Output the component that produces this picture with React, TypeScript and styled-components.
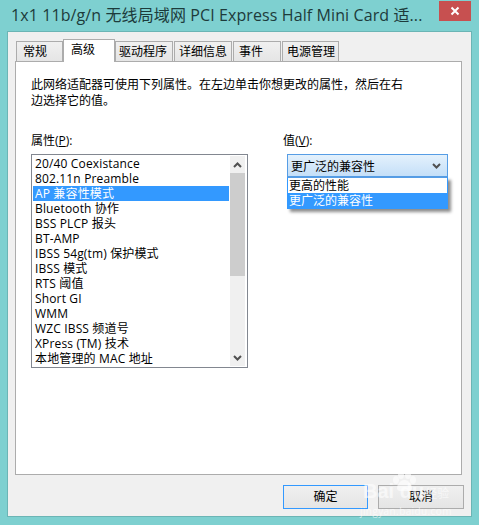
import React from 'react';
import styled, { createGlobalStyle } from 'styled-components';

const GlobalStyle = createGlobalStyle`
  html, body {
    margin: 0;
    padding: 0;
    background: #7ed0d0;
  }
  body {
    font-family: "Open Sans", "Noto Sans CJK SC", sans-serif;
    font-size: 12px;
    color: #000;
  }
`;

const Win = styled.div`
  position: relative;
  width: 479px;
  height: 525px;
  box-sizing: border-box;
  padding: 0 7px 8px 7px;
  display: flex;
  flex-direction: column;
  overflow: hidden;
  background: #7ed0d0;
`;

const TitleBar = styled.div`
  height: 31px;
  flex: none;
  display: flex;
  align-items: flex-start;
  justify-content: space-between;
`;

const Title = styled.div`
  margin: 5px 0 0 4px;
  font-size: 16px;
  line-height: 20px;
  letter-spacing: 0.1px;
  color: #1d3b3b;
  white-space: nowrap;
`;

const CloseBtn = styled.div`
  width: 32px;
  height: 20px;
  margin: 1px 1px 0 0;
  background: #c75050;
  display: flex;
  align-items: center;
  justify-content: center;
`;

const Client = styled.div`
  flex: 1;
  min-height: 0;
  box-sizing: border-box;
  border: 1px solid #6bb5b5;
  background: #f0f0f0;
  padding: 7px 9px 9px 7px;
  display: flex;
  flex-direction: column;
`;

const TabRow = styled.div`
  display: flex;
  height: 23px;
  flex: none;
  align-items: flex-end;
  padding-left: 1px;
  position: relative;
  z-index: 1;
  margin-bottom: -1px;
`;

const Tab = styled.div<{ $w: number; $pad: number; $active?: boolean }>`
  box-sizing: border-box;
  width: ${(p) => p.$w}px;
  height: ${(p) => (p.$active ? 23 : 21)}px;
  margin-left: ${(p) => (p.$active ? -1 : 0)}px;
  margin-right: ${(p) => (p.$active ? 0 : 1)}px;
  border: 1px solid #acacac;
  border-bottom: ${(p) => (p.$active ? 'none' : '1px solid #acacac')};
  background: ${(p) => (p.$active ? '#fff' : 'linear-gradient(#f0f0f0, #e5e5e5)')};
  padding-left: ${(p) => p.$pad}px;
  line-height: 20px;
  white-space: nowrap;
  font-size: 12px;
`;

const Panel = styled.div`
  flex: none;
  height: 414px;
  box-sizing: border-box;
  border: 1px solid #acacac;
  background: #fff;
  padding: 15px 15px 0 15px;
`;

const Intro = styled.div`
  width: 375px;
  line-height: 16px;
  font-size: 12px;
`;

const Columns = styled.div`
  display: flex;
  margin-top: 24px;
`;

const LeftCol = styled.div`
  width: 217px;
  flex: none;
`;

const RightCol = styled.div`
  width: 161px;
  margin-left: 39px;
  flex: none;
  position: relative;
`;

const FieldLabel = styled.div`
  height: 15px;
  line-height: 15px;
  margin-bottom: 6px;
  font-size: 12px;
  u {
    text-decoration: underline;
  }
`;

const ValueLabel = styled(FieldLabel)`
  margin-left: -4px;
`;

const ListBox = styled.div`
  box-sizing: border-box;
  width: 217px;
  height: 214px;
  border: 1px solid #828790;
  padding: 1px 2px 1px 1px;
  display: flex;
  background: #fff;
`;

const Rows = styled.div`
  flex: 1;
  min-width: 0;
`;

const Row = styled.div<{ $sel?: boolean }>`
  height: 15px;
  line-height: 15px;
  padding-left: 2px;
  white-space: nowrap;
  font-size: 12px;
  letter-spacing: 0.15px;
  background: ${(p) => (p.$sel ? '#3399ff' : 'transparent')};
  color: ${(p) => (p.$sel ? '#fff' : '#000')};
`;

const ScrollBar = styled.div`
  width: 15px;
  flex: none;
  margin-left: 1px;
  display: flex;
  flex-direction: column;
  background: #f0f0f0;
`;

const ScrollArrow = styled.div`
  height: 17px;
  flex: none;
  display: flex;
  align-items: center;
  justify-content: center;
`;

const ScrollThumb = styled.div`
  height: 103px;
  flex: none;
  background: #cdcdcd;
`;

const ScrollTrack = styled.div`
  flex: 1;
`;

const Combo = styled.div`
  box-sizing: border-box;
  height: 23px;
  border: 1px solid #569de5;
  background: linear-gradient(#e4f1fc, #c4dff8);
  display: flex;
  align-items: center;
  justify-content: space-between;
  padding: 0 6px 0 3px;
  font-size: 12px;
`;

const DropList = styled.div`
  position: absolute;
  top: 44px;
  left: 0;
  width: 161px;
  box-sizing: border-box;
  border: 1px solid #3399ff;
  border-top: 1px solid #569de5;
  background: #fff;
  box-shadow: 3px 3px 3px rgba(0, 0, 0, 0.45);
`;

const DropItem = styled.div<{ $sel?: boolean }>`
  height: 15px;
  line-height: 15px;
  padding-left: 1px;
  font-size: 12px;
  background: ${(p) => (p.$sel ? '#3399ff' : '#fff')};
  color: ${(p) => (p.$sel ? '#fff' : '#000')};
`;

const Footer = styled.div`
  display: flex;
  justify-content: flex-end;
  gap: 10px;
  margin-top: 10px;
  margin-right: -2px;
`;

const Btn = styled.div<{ $primary?: boolean }>`
  box-sizing: border-box;
  width: ${(p) => (p.$primary ? 85 : 86)}px;
  height: 24px;
  line-height: 21px;
  text-align: center;
  font-size: 12px;
  border: ${(p) => (p.$primary ? '1px solid #3399ff' : '1px solid #acacac')};
  background: linear-gradient(#f0f0f0, #e5e5e5);
`;

const Watermark = styled.div`
  position: absolute;
  left: 360px;
  top: 470px;
  width: 119px;
  height: 50px;
  color: rgba(255, 255, 255, 0.6);
  pointer-events: none;
`;

const MarkBrand = styled.div`
  position: absolute;
  left: 3px;
  top: 10px;
  font-family: "Liberation Sans", "Noto Sans CJK SC", sans-serif;
  font-size: 20px;
  font-weight: 700;
  white-space: nowrap;
`;

const MarkCn = styled.span`
  margin-left: 1px;
  font-size: 12px;
  font-weight: 400;
`;

const MarkUrl = styled.div`
  position: absolute;
  left: 0;
  top: 34px;
  font-size: 10px;
  letter-spacing: 0.4px;
  white-space: nowrap;
`;

const MarkPaw = styled.svg`
  position: absolute;
  left: 31px;
  top: 1px;
`;

const tabs = [
  { label: '常规', w: 47, pad: 6 },
  { label: '高级', w: 52, pad: 7, active: true },
  { label: '驱动程序', w: 58, pad: 3 },
  { label: '详细信息', w: 58, pad: 4 },
  { label: '事件', w: 48, pad: 5 },
  { label: '电源管理', w: 57, pad: 4 },
];

const props = [
  '20/40 Coexistance',
  '802.11n Preamble',
  'AP 兼容性模式',
  'Bluetooth 协作',
  'BSS PLCP 报头',
  'BT-AMP',
  'IBSS 54g(tm) 保护模式',
  'IBSS 模式',
  'RTS 阈值',
  'Short GI',
  'WMM',
  'WZC IBSS 频道号',
  'XPress (TM) 技术',
  '本地管理的 MAC 地址',
];

const Chevron: React.FC<{ up?: boolean; color?: string }> = ({ up, color = '#505050' }) => (
  <svg width="9" height="6" viewBox="0 0 9 6">
    <path
      d={up ? 'M1 5 L4.5 1.5 L8 5' : 'M1 1 L4.5 4.5 L8 1'}
      fill="none"
      stroke={color}
      strokeWidth="2"
    />
  </svg>
);

const App: React.FC = () => {
  return (
    <Win>
      <GlobalStyle />
      <TitleBar>
        <Title>1x1 11b/g/n 无线局域网 PCI Express Half Mini Card 适...</Title>
        <CloseBtn>
          <svg width="10" height="10" viewBox="0 0 10 10">
            <path d="M1.5 1.5 L8.5 8.5 M8.5 1.5 L1.5 8.5" stroke="#fff" strokeWidth="2" />
          </svg>
        </CloseBtn>
      </TitleBar>
      <Client>
        <TabRow>
          {tabs.map((t) => (
            <Tab key={t.label} $w={t.w} $pad={t.pad} $active={t.active}>
              {t.label}
            </Tab>
          ))}
        </TabRow>
        <Panel>
          <Intro>此网络适配器可使用下列属性。在左边单击你想更改的属性，然后在右边选择它的值。</Intro>
          <Columns>
            <LeftCol>
              <FieldLabel>
                属性(<u>P</u>):
              </FieldLabel>
              <ListBox>
                <Rows>
                  {props.map((p) => (
                    <Row key={p} $sel={p.startsWith('AP ')}>
                      {p}
                    </Row>
                  ))}
                </Rows>
                <ScrollBar>
                  <ScrollArrow>
                    <Chevron up />
                  </ScrollArrow>
                  <ScrollThumb />
                  <ScrollTrack />
                  <ScrollArrow>
                    <Chevron />
                  </ScrollArrow>
                </ScrollBar>
              </ListBox>
            </LeftCol>
            <RightCol>
              <ValueLabel>
                值(<u>V</u>):
              </ValueLabel>
              <Combo>
                更广泛的兼容性
                <Chevron />
              </Combo>
              <DropList>
                <DropItem>更高的性能</DropItem>
                <DropItem $sel>更广泛的兼容性</DropItem>
              </DropList>
            </RightCol>
          </Columns>
        </Panel>
        <Footer>
          <Btn $primary>确定</Btn>
          <Btn>取消</Btn>
        </Footer>
      </Client>
      <Watermark>
        <MarkPaw width="26" height="22" viewBox="0 0 26 22">
          <g fill="currentColor">
            <ellipse cx="5" cy="9" rx="3" ry="4" />
            <ellipse cx="10" cy="4" rx="3" ry="4" />
            <ellipse cx="17" cy="4" rx="3" ry="4" />
            <ellipse cx="22" cy="9" rx="3" ry="4" />
            <path d="M13.5 9 C9 9 6 14 6 17 C6 21 11 20 13.5 20 C16 20 21 21 21 17 C21 14 18 9 13.5 9 Z" />
          </g>
        </MarkPaw>
        <MarkBrand>
          Bai du<MarkCn>经验</MarkCn>
        </MarkBrand>
        <MarkUrl>jingyan.baidu.com</MarkUrl>
      </Watermark>
    </Win>
  );
};

export default App;
